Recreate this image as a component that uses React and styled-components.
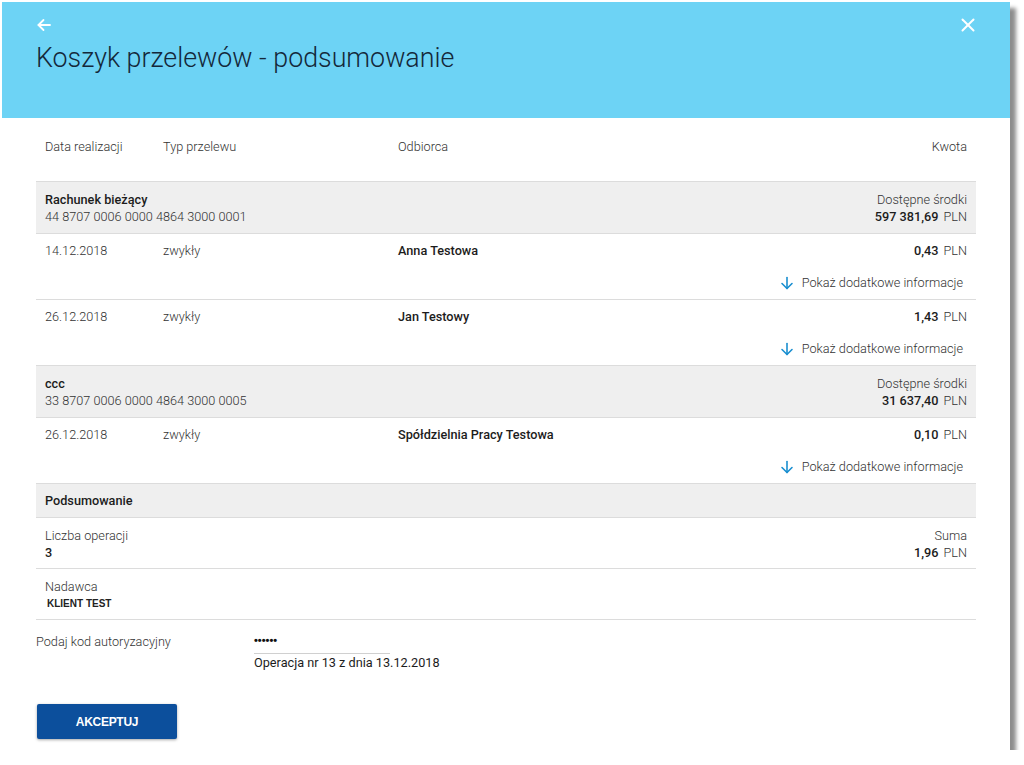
import React from 'react';
import styled, { createGlobalStyle } from 'styled-components';

const GlobalStyle = createGlobalStyle`
  html, body {
    margin: 0;
    padding: 0;
    background: #ffffff;
    font-family: Roboto, "Liberation Sans", Arial, sans-serif;
  }
`;

const Window = styled.div`
  margin: 2px 0 0 2px;
  width: 1008px;
  height: 748px;
  background: #fff;
  box-shadow: 6px 6px 4px rgba(0, 0, 0, 0.45);
  display: flex;
  flex-direction: column;
`;

const Header = styled.header`
  background: #6dd3f5;
  height: 116px;
  padding: 0 34px;
  box-sizing: border-box;
  display: flex;
  flex-direction: column;
`;

const HeaderBar = styled.div`
  display: flex;
  justify-content: space-between;
  align-items: center;
  height: 26px;
  padding-top: 10px;
`;

const IconBtn = styled.button`
  background: none;
  border: 0;
  padding: 0;
  width: 16px;
  height: 16px;
  display: flex;
  align-items: center;
  justify-content: center;
  cursor: pointer;
`;

const Title = styled.h1`
  margin: 4px 0 0;
  font-weight: 300;
  font-size: 26.8px;
  color: #14283a;
`;

const Body = styled.div`
  padding: 0 34px;
  display: flex;
  flex-direction: column;
  font-size: 12.7px;
`;

const Row = styled.div`
  display: grid;
  grid-template-columns: 118px 235px 1fr auto;
  padding: 0 9px;
  align-items: start;
`;

const HeadRow = styled(Row)`
  height: 63px;
  box-sizing: border-box;
  padding-top: 20px;
  line-height: 17px;
  font-weight: 300;
  color: #333;
`;

const Band = styled.div`
  background: #efefef;
  border-top: 1px solid #dcdcdc;
  display: flex;
  justify-content: space-between;
  padding: ${p => (p.small ? '8px 9px 8px' : '9px 9px 8px')};
  line-height: 17px;
  color: #222;
`;

const Stack = styled.div`
  display: flex;
  flex-direction: column;
  align-items: ${p => (p.right ? 'flex-end' : 'flex-start')};
`;

const Strong = styled.span`
  font-weight: 500;
  color: #1c1c1c;
`;

const Light = styled.span`
  font-weight: 300;
  color: #333;
`;

const TxRow = styled.div`
  border-top: 1px solid #dcdcdc;
  padding: 8px 0 8px;
  display: flex;
  flex-direction: column;
  line-height: 17px;
`;

const Amount = styled.span`
  text-align: right;
  white-space: nowrap;
`;

const Currency = styled.span`
  font-weight: 300;
  color: #333;
  margin-left: 5px;
`;

const MoreLink = styled.a`
  align-self: flex-end;
  margin: 15px 13px 0 0;
  display: flex;
  align-items: center;
  gap: 8px;
  font-weight: 300;
  color: #333;
  cursor: pointer;
`;

const SumRow = styled.div`
  border-top: 1px solid #dcdcdc;
  display: flex;
  justify-content: space-between;
  padding: 9px 9px 7px;
  height: 34px;
  line-height: 17px;
`;

const ClientName = styled.span`
  font-family: "Liberation Sans", Arial, sans-serif;
  font-weight: 700;
  font-size: 10px;
  margin-left: 2px;
  color: #222;
`;

const Divider = styled.div`
  border-top: 1px solid #dcdcdc;
`;

const AuthRow = styled.div`
  display: flex;
  padding: 11px 0 0;
`;

const AuthLabel = styled.div`
  width: 218px;
  font-weight: 300;
  color: #333;
  padding-top: 3px;
`;

const AuthField = styled.div`
  display: flex;
  flex-direction: column;
`;

const Dots = styled.div`
  width: 136px;
  box-sizing: border-box;
  border-bottom: 1px solid #d0d0d0;
  height: 23px;
  padding-top: 2px;
  line-height: 14px;
  font-size: 11px;
  color: #111;
  font-family: "Liberation Sans", Arial, sans-serif;
  font-weight: 700;
`;

const OpText = styled.div`
  color: #1c1c1c;
  font-weight: 400;
  line-height: 17px;
`;

const Accept = styled.button`
  margin: 33px 0 0 1px;
  width: 140px;
  height: 35px;
  border: 0;
  border-radius: 2px;
  background: #0c4f9c;
  color: #fff;
  font-family: "Liberation Sans", Arial, sans-serif;
  font-weight: 700;
  font-size: 12px;
  letter-spacing: -0.3px;
  box-shadow: 0 1px 3px rgba(0, 0, 0, 0.35);
  cursor: pointer;
`;

const ArrowDown = () => (
  <svg width="14" height="14" viewBox="0 0 14 14" fill="none" stroke="#1a8fd0" strokeWidth="1.6" strokeLinecap="round" strokeLinejoin="round">
    <path d="M7 1.5V12.5" />
    <path d="M2 7.5L7 12.5L12 7.5" />
  </svg>
);

const groups = [
  {
    name: 'Rachunek bieżący',
    number: '44 8707 0006 0000 4864 3000 0001',
    funds: '597 381,69',
    items: [
      { date: '14.12.2018', type: 'zwykły', to: 'Anna Testowa', amount: '0,43' },
      { date: '26.12.2018', type: 'zwykły', to: 'Jan Testowy', amount: '1,43' },
    ],
  },
  {
    name: 'ccc',
    number: '33 8707 0006 0000 4864 3000 0005',
    funds: '31 637,40',
    items: [
      { date: '26.12.2018', type: 'zwykły', to: 'Spółdzielnia Pracy Testowa', amount: '0,10' },
    ],
  },
];

export default function App() {
  return (
    <>
      <GlobalStyle />
      <Window>
        <Header>
          <HeaderBar>
            <IconBtn aria-label="Wstecz">
              <svg width="14" height="14" viewBox="0 0 14 14" fill="none" stroke="#fff" strokeWidth="1.8" strokeLinecap="round" strokeLinejoin="round">
                <path d="M13 7H1.5" />
                <path d="M6.5 2L1.5 7L6.5 12" />
              </svg>
            </IconBtn>
            <IconBtn aria-label="Zamknij">
              <svg width="14" height="14" viewBox="0 0 14 14" fill="none" stroke="#fff" strokeWidth="2" strokeLinecap="round">
                <path d="M1.5 1.5L12.5 12.5" />
                <path d="M12.5 1.5L1.5 12.5" />
              </svg>
            </IconBtn>
          </HeaderBar>
          <Title>Koszyk przelewów - podsumowanie</Title>
        </Header>

        <Body>
          <HeadRow>
            <span>Data realizacji</span>
            <span>Typ przelewu</span>
            <span>Odbiorca</span>
            <span>Kwota</span>
          </HeadRow>

          {groups.map(g => (
            <React.Fragment key={g.number}>
              <Band>
                <Stack>
                  <Strong>{g.name}</Strong>
                  <Light>{g.number}</Light>
                </Stack>
                <Stack right>
                  <Light>Dostępne środki</Light>
                  <span>
                    <Strong>{g.funds}</Strong>
                    <Currency>PLN</Currency>
                  </span>
                </Stack>
              </Band>
              {g.items.map(t => (
                <TxRow key={t.to + t.amount}>
                  <Row>
                    <Light>{t.date}</Light>
                    <Light>{t.type}</Light>
                    <Strong>{t.to}</Strong>
                    <Amount>
                      <Strong>{t.amount}</Strong>
                      <Currency>PLN</Currency>
                    </Amount>
                  </Row>
                  <MoreLink>
                    <ArrowDown />
                    Pokaż dodatkowe informacje
                  </MoreLink>
                </TxRow>
              ))}
            </React.Fragment>
          ))}

          <Band small>
            <Strong>Podsumowanie</Strong>
          </Band>
          <SumRow>
            <Stack>
              <Light>Liczba operacji</Light>
              <Strong>3</Strong>
            </Stack>
            <Stack right>
              <Light>Suma</Light>
              <span>
                <Strong>1,96</Strong>
                <Currency>PLN</Currency>
              </span>
            </Stack>
          </SumRow>
          <SumRow>
            <Stack>
              <Light>Nadawca</Light>
              <ClientName>KLIENT TEST</ClientName>
            </Stack>
          </SumRow>
          <Divider />

          <AuthRow>
            <AuthLabel>Podaj kod autoryzacyjny</AuthLabel>
            <AuthField>
              <Dots>••••••</Dots>
              <OpText>Operacja nr 13 z dnia 13.12.2018</OpText>
            </AuthField>
          </AuthRow>
          <div>
            <Accept>AKCEPTUJ</Accept>
          </div>
        </Body>
      </Window>
    </>
  );
}
